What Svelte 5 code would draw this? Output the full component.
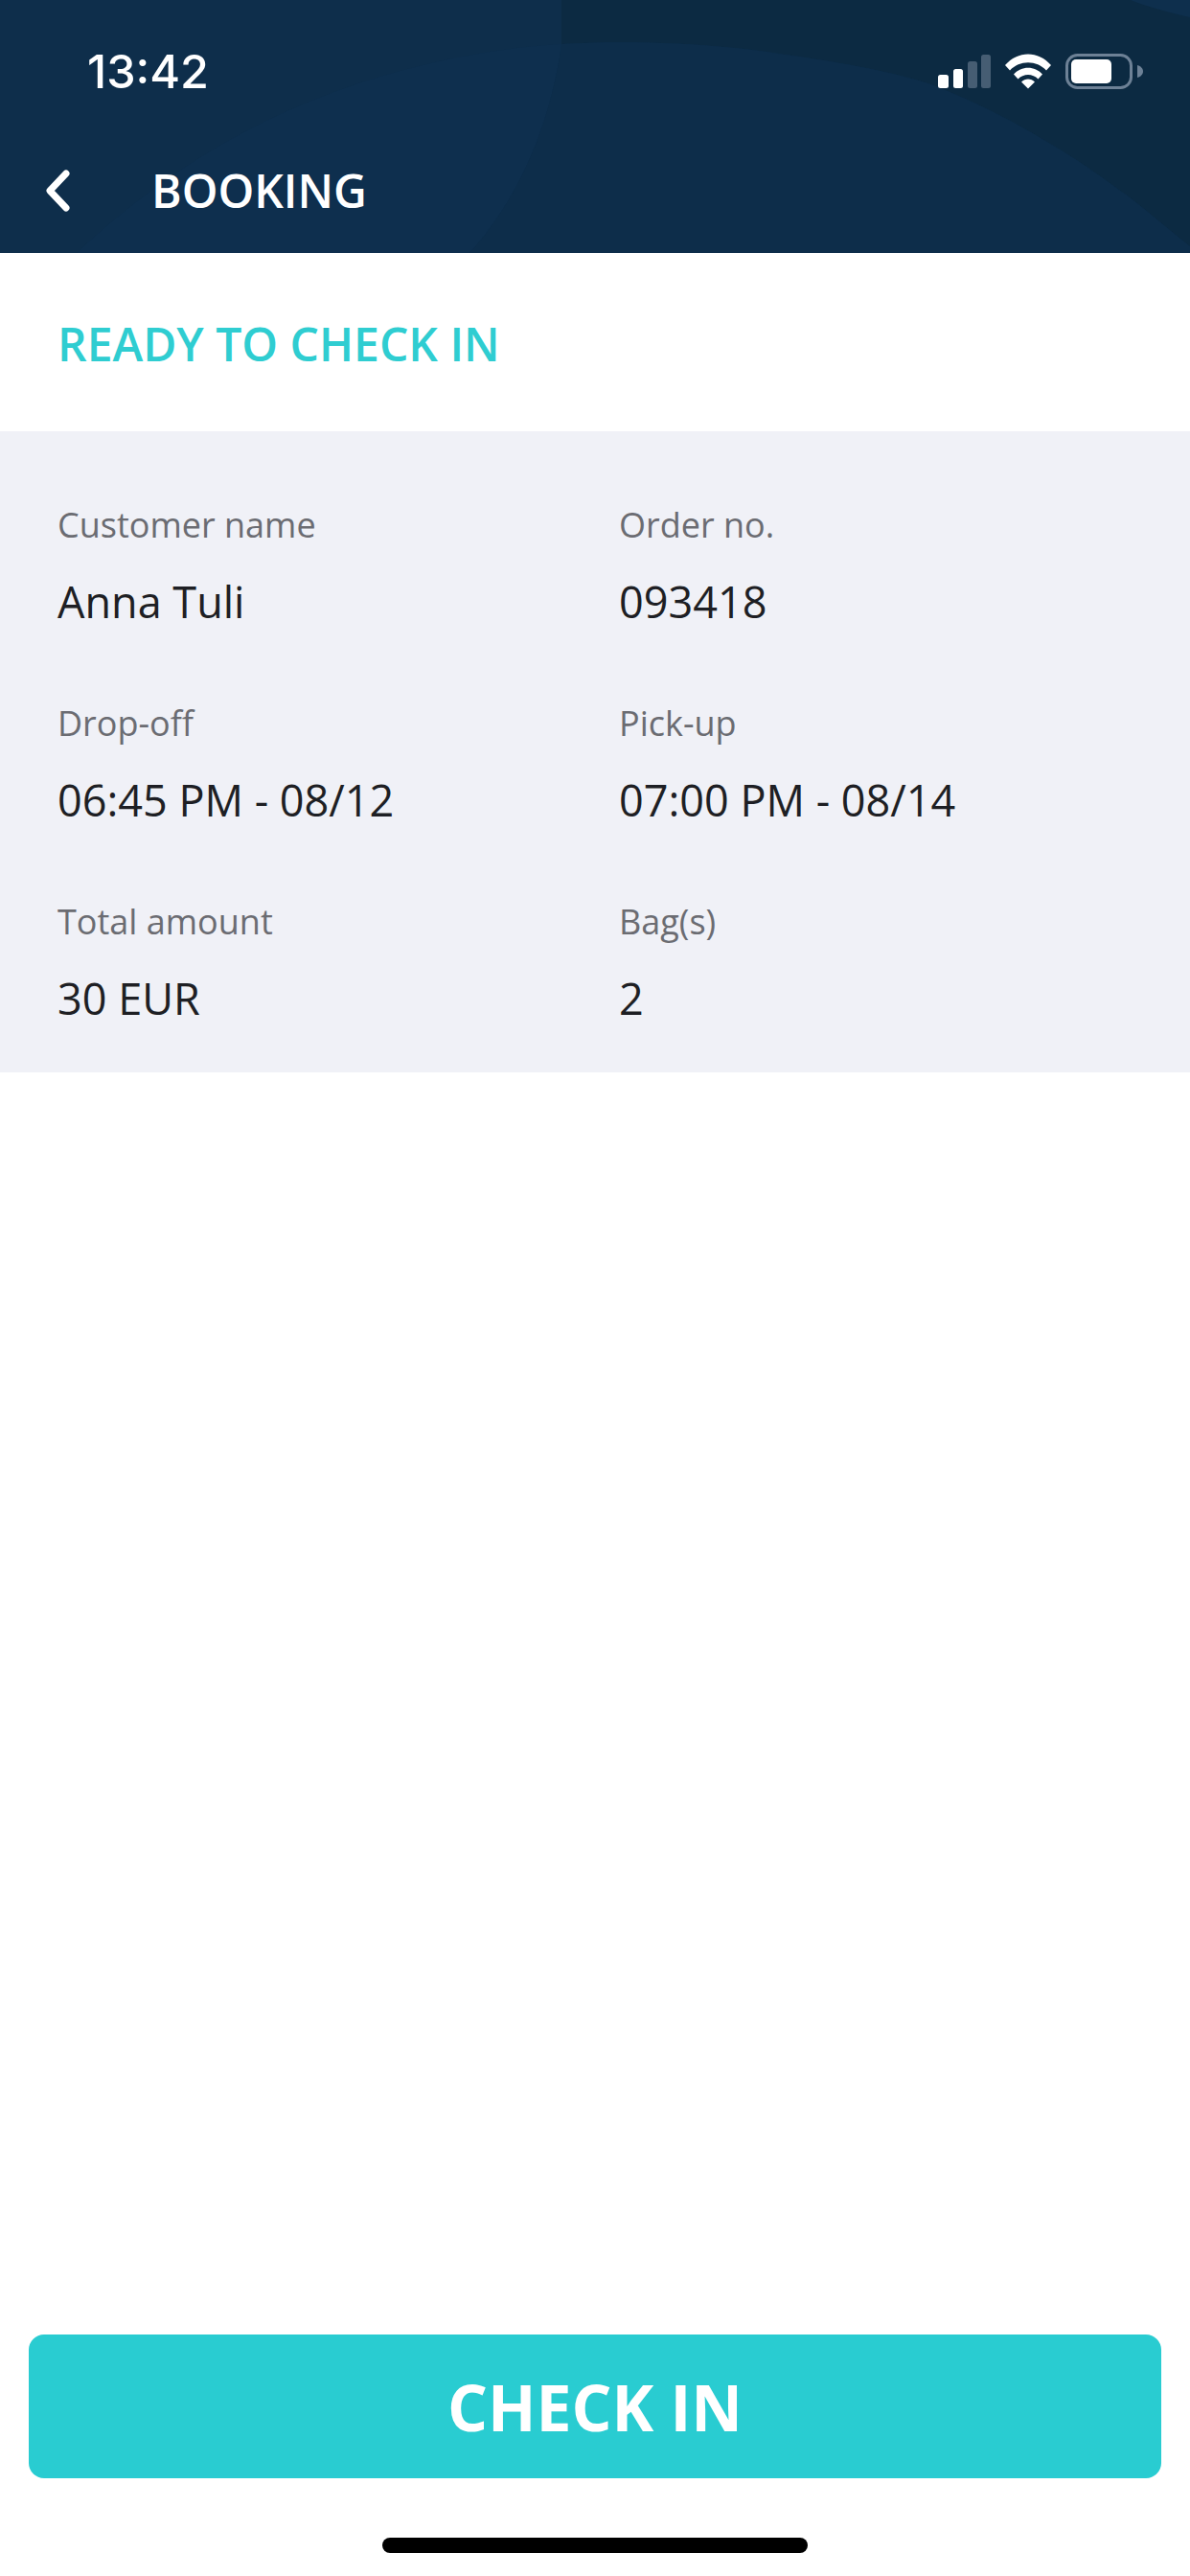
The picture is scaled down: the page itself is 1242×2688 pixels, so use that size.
<script>
  const fields = [
    { label: 'Customer name', value: 'Anna Tuli' },
    { label: 'Order no.', value: '093418' },
    { label: 'Drop-off', value: '06:45 PM - 08/12' },
    { label: 'Pick-up', value: '07:00 PM - 08/14' },
    { label: 'Total amount', value: '30 EUR' },
    { label: 'Bag(s)', value: '2' }
  ];
</script>

<div class="page">
  <header class="header">
    <svg class="bg" viewBox="0 0 1242 264" preserveAspectRatio="none" aria-hidden="true">
      <rect width="1242" height="264" fill="#0e2e4b" />
      <path d="M586 0H1242V257C1220 240 1200 222 1175 203C1150 185 1130 170 1096 150C1060 128 1030 112 977 90C950 80 900 68 819 57C740 44 650 42 586 46Z" fill="#0c2a42" />
      <path d="M1180 0C1200 8 1225 14 1242 18V0Z" fill="#0e2f4d" />
      <path d="M80 264C180 170 300 100 450 66C500 54 550 48 586 46C575 130 540 210 490 264Z" fill="#0e2f4e" />
      <path d="M490 264C540 210 575 130 586 46C650 42 740 44 819 57C900 68 950 80 977 90C1030 112 1060 128 1096 150C1130 170 1150 185 1175 203C1200 222 1220 240 1242 257V264Z" fill="#0d2d4a" />
    </svg>
    <div class="status">
      <span class="time">13:42</span>
      <svg class="status-icons" width="214" height="37" viewBox="979 56 214 37" aria-hidden="true">
        <rect x="979" y="78" width="11" height="14" rx="2.5" fill="#fff" />
        <rect x="995" y="72" width="10" height="20" rx="2.5" fill="#fff" />
        <rect x="1010" y="64" width="10" height="28" rx="2.5" fill="#465d73" />
        <rect x="1024" y="57" width="10" height="35" rx="2.5" fill="#465d73" />
        <path d="M1049 68C1062 52.500 1084 52.500 1097 68L1092 73.500C1082 62.500 1064 62.500 1054 73.500Z" fill="#fff" />
        <path d="M1058 77.500C1066 68.500 1080 68.500 1088 77.500L1083.500 82.500C1078 76.500 1068 76.500 1062.500 82.500Z" fill="#fff" />
        <path d="M1066 85.500C1070 81.500 1076 81.500 1080 85.500L1073 92.500Z" fill="#fff" />
        <rect x="1113.500" y="57.500" width="67" height="34" rx="11" fill="none" stroke="#6d8196" stroke-width="3" />
        <rect x="1118" y="62" width="42" height="25" rx="5" fill="#fff" />
        <path d="M1187 68C1191 69 1193 72 1193 74.500C1193 77 1191 80 1187 81Z" fill="#6d8196" />
      </svg>
    </div>
    <nav class="nav">
      <svg class="back" width="30" height="46" viewBox="0 0 30 46" aria-hidden="true">
        <path d="M24 5L7 23L24 41" fill="none" stroke="#fff" stroke-width="7" stroke-linecap="round" stroke-linejoin="round" />
      </svg>
      <span class="title">BOOKING</span>
    </nav>
  </header>

  <h1 class="state">READY TO CHECK IN</h1>

  <section class="details">
    {#each fields as f}
      <div class="field">
        <span class="label">{f.label}</span>
        <span class="value">{f.value}</span>
      </div>
    {/each}
  </section>

  <div class="footer">
    <button class="cta">CHECK IN</button>
    <div class="home"></div>
  </div>
</div>

<style>
  :global(body) {
    margin: 0;
    background: #fff;
  }
  .page {
    width: 1242px;
    height: 2688px;
    display: flex;
    flex-direction: column;
    font-family: "Open Sans", "Noto Sans", sans-serif;
    background: #fff;
  }
  .header {
    position: relative;
    height: 264px;
    flex: none;
    overflow: hidden;
    box-sizing: border-box;
  }
  .bg {
    position: absolute;
    inset: 0;
    width: 100%;
    height: 100%;
  }
  .status {
    position: relative;
    display: flex;
    justify-content: space-between;
    align-items: flex-start;
    padding: 56px 49px 0 91px;
    height: 164px;
    box-sizing: border-box;
  }
  .time {
    font-family: Inter, Roboto, sans-serif;
    font-weight: 500;
    font-size: 48.5px;
    line-height: 37px;
    color: #fff;
  }
  .nav {
    position: relative;
    display: flex;
    align-items: center;
    padding-left: 45px;
    gap: 83px;
    height: 70px;
  }
  .back {
    display: block;
    flex: none;
  }
  .title {
    font-size: 48px;
    font-weight: 600;
    color: #fff;
    line-height: 70px;
  }
  .state {
    margin: 0;
    height: 186px;
    padding-left: 60px;
    box-sizing: border-box;
    font-size: 48px;
    font-weight: 600;
    line-height: 190px;
    color: #2fcdd1;
  }
  .details {
    background: #f0f1f7;
    height: 669px;
    box-sizing: border-box;
    padding: 73px 0 0 60px;
    display: grid;
    grid-template-columns: 586px 1fr;
    grid-auto-rows: 207px;
  }
  .field {
    display: flex;
    flex-direction: column;
  }
  .label {
    font-size: 36px;
    line-height: 50px;
    color: #6b6c72;
  }
  .value {
    font-size: 45px;
    line-height: 62px;
    margin-top: 24px;
    color: #1e1f24;
  }
  .footer {
    margin-top: auto;
    display: flex;
    flex-direction: column;
    align-items: center;
    padding: 0 30px 24px;
  }
  .cta {
    width: 100%;
    height: 150px;
    border: none;
    border-radius: 16px;
    background: #29ccd1;
    color: #fff;
    font-family: inherit;
    font-size: 66px;
    font-weight: 700;
    padding: 0;
  }
  .home {
    width: 444px;
    height: 16px;
    border-radius: 8px;
    background: #000;
    margin-top: 62px;
  }
</style>
